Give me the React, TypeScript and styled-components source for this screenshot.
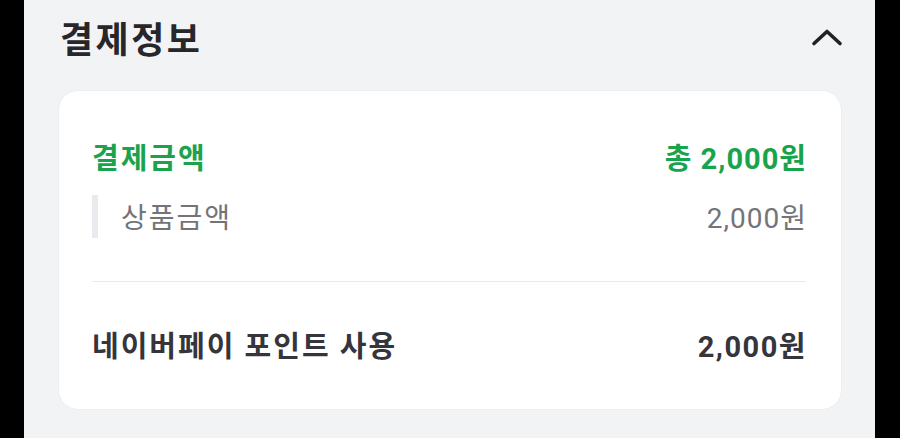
import React from "react";
import styled, { createGlobalStyle } from "styled-components";

const Global = createGlobalStyle`
  html, body { margin: 0; padding: 0; background: #000; }
  body { font-family: Roboto, "Noto Sans CJK KR", sans-serif; }
  * { box-sizing: border-box; }
`;

const Frame = styled.div`
  width: 900px;
  height: 438px;
  padding: 0 25px 0 24px;
  background: #000;
  overflow: hidden;
`;

const Panel = styled.div`
  height: 100%;
  background: #f2f3f5;
  padding: 0 33px 0 34px;
`;

const Header = styled.div`
  height: 90px;
  display: flex;
  align-items: center;
  justify-content: space-between;
  padding: 0 0 16px 2px;
`;

const Title = styled.h2`
  margin: 0;
  font-size: 36px;
  font-weight: 700;
  color: #26262b;
  letter-spacing: 2.5px;
`;

const Toggle = styled.button`
  border: 0;
  background: none;
  padding: 0;
  width: 32px;
  height: 20px;
  display: flex;
  align-items: center;
  justify-content: center;
  margin-right: -1px;
`;

const Card = styled.div`
  background: #fff;
  border: 1px solid #eceef1;
  border-radius: 20px;
  padding: 45px 35px 45px 33px;
`;

const Row = styled.div<{ $tone: "accent" | "sub" | "main" }>`
  display: flex;
  align-items: center;
  justify-content: space-between;
  height: ${(p) => (p.$tone === "sub" ? 44 : 40)}px;
  margin-top: ${(p) => (p.$tone === "sub" ? 18 : 0)}px;
  font-size: ${(p) => (p.$tone === "sub" ? 28 : 29)}px;
  font-weight: ${(p) => (p.$tone === "sub" ? 400 : p.$tone === "accent" ? 700 : 600)};
  color: ${(p) =>
    p.$tone === "accent" ? "#1aa34d" : p.$tone === "sub" ? "#747478" : "#35353b"};
  letter-spacing: 2px;
`;

const SubLabel = styled.div`
  display: flex;
  align-items: center;
  height: 100%;
  gap: 23px;
`;

const Bar = styled.span`
  width: 6px;
  height: 43px;
  background: #e9eaee;
`;

const Amount = styled.span<{ $bold?: boolean }>`
  font-weight: ${(p) => (p.$bold ? 700 : "inherit")};
  letter-spacing: ${(p) => (p.$bold ? 1.5 : 1)}px;
  margin-right: -1px;
`;

const Divider = styled.hr`
  border: 0;
  height: 1px;
  background: #e9e9eb;
  margin: 43px 0 42px 0;
`;

export default function App() {
  return (
    <>
      <Global />
      <Frame>
        <Panel>
          <Header>
            <Title>결제정보</Title>
            <Toggle aria-label="접기">
              <svg width="32" height="20" viewBox="0 0 32 20">
                <polyline
                  points="3,16.5 16,4.5 29,16.5"
                  fill="none"
                  stroke="#222226"
                  strokeWidth="3.6"
                  strokeLinecap="round"
                  strokeLinejoin="round"
                />
              </svg>
            </Toggle>
          </Header>
          <Card>
            <Row $tone="accent">
              <span>결제금액</span>
              <Amount>총 2,000원</Amount>
            </Row>
            <Row $tone="sub">
              <SubLabel>
                <Bar />
                <span>상품금액</span>
              </SubLabel>
              <Amount>2,000원</Amount>
            </Row>
            <Divider />
            <Row $tone="main">
              <span>네이버페이 포인트 사용</span>
              <Amount $bold>2,000원</Amount>
            </Row>
          </Card>
        </Panel>
      </Frame>
    </>
  );
}
